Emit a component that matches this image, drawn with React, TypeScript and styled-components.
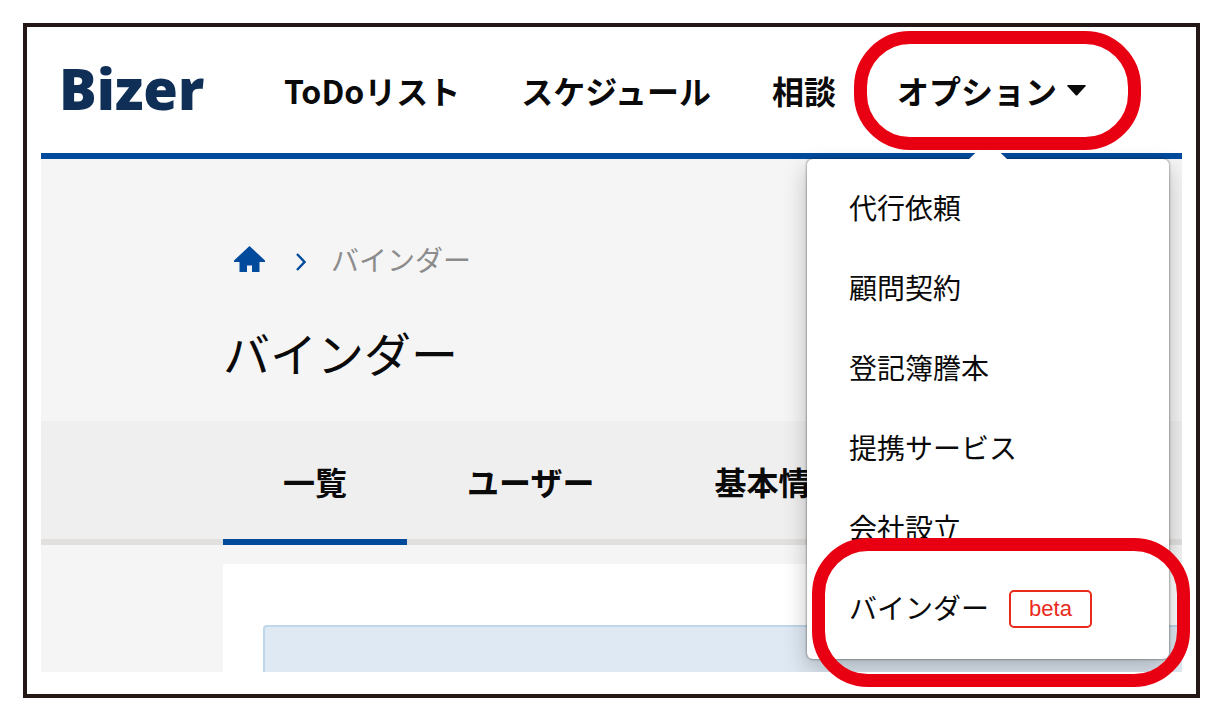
import React from 'react';
import styled, { createGlobalStyle } from 'styled-components';

const GlobalStyle = createGlobalStyle`
  *, *::before, *::after { box-sizing: border-box; }
  body {
    margin: 0;
    background: #fff;
    color: #0a0a0a;
    font-family: "Noto Sans CJK JP", sans-serif;
  }
`;

const NAVY = '#0f2f56';
const BLUE = '#024b9c';
const RED = '#e80012';

const Frame = styled.div`
  position: relative;
  margin: 23px;
  padding: 0 14px 22px;
  border: 4px solid #231815;
`;

const Screen = styled.div`
  overflow: hidden;
  background: #f5f5f5;
`;

const Header = styled.header`
  display: flex;
  align-items: center;
  height: 132px;
  padding-left: 18px;
  border-bottom: 6px solid ${BLUE};
  background: #fff;
`;

const Logo = styled.a`
  width: 225px;
  padding-bottom: 4px;
  color: ${NAVY};
  font-family: "Open Sans", "Noto Sans", sans-serif;
  font-size: 56px;
  font-weight: 800;
  line-height: 80px;
  text-decoration: none;
`;

const Nav = styled.nav`
  display: flex;
  gap: 61px;
  font-size: 32px;
  font-weight: 700;
  line-height: 48px;
  white-space: nowrap;
`;

const NavLink = styled.a`
  color: inherit;
  text-decoration: none;
`;

const NavDropdown = styled.div`
  position: relative;
`;

const NavButton = styled.button`
  display: flex;
  align-items: center;
  gap: 10px;
  padding: 0;
  border: 0;
  background: none;
  color: inherit;
  font: inherit;
`;

const Menu = styled.ul`
  position: absolute;
  z-index: 1;
  top: 93px;
  left: -90px;
  width: 362px;
  margin: 0;
  padding: 8px 0 12px;
  list-style: none;
  border-radius: 6px;
  background: #fff;
  box-shadow: 0 0 2px 1px rgba(0, 0, 0, 0.28), 0 10px 24px rgba(0, 0, 0, 0.24);

  &::before {
    content: '';
    position: absolute;
    bottom: 100%;
    left: 162px;
    border: solid transparent;
    border-width: 0 19px 18px;
    border-bottom-color: #fff;
  }
`;

const MenuLink = styled.a`
  display: flex;
  align-items: center;
  gap: 20px;
  height: 80px;
  padding-left: 42px;
  color: inherit;
  font-size: 28px;
  font-weight: 400;
  line-height: 40px;
  text-decoration: none;
`;

const Badge = styled.span`
  margin-top: 4px;
  padding: 0 18px;
  border: 2px solid #ea2a1c;
  border-radius: 5px;
  color: #ea2a1c;
  font-family: "Liberation Sans", sans-serif;
  font-size: 22px;
  line-height: 34px;
`;

const PageHead = styled.div`
  height: 262px;
  padding: 80px 0 0 182px;
`;

const Breadcrumb = styled.nav`
  display: flex;
  align-items: center;
  height: 40px;
  padding-left: 11px;
  color: #8c8c8c;
  font-size: 28px;
  line-height: 40px;
`;

const HomeLink = styled.a`
  display: flex;
  margin-right: 31px;
  color: ${BLUE};
`;

const Separator = styled.svg`
  margin: 6px 25px 0 0;
`;

const Title = styled.h1`
  margin: 37px 0 0;
  font-size: 47px;
  font-weight: 400;
  line-height: 72px;
`;

const Tabs = styled.nav`
  display: flex;
  height: 124px;
  padding-left: 182px;
  background: #efefef;
  box-shadow: inset 0 -6px #e1e0de;
`;

const Tab = styled.a<{ $active?: boolean }>`
  display: flex;
  align-items: center;
  padding: 2px 60px 0;
  border-bottom: 6px solid ${({ $active }) => ($active ? BLUE : 'transparent')};
  color: inherit;
  font-size: 32px;
  font-weight: 700;
  line-height: 48px;
  text-decoration: none;
  white-space: nowrap;
`;

const Panel = styled.main`
  margin: 19px 0 0 182px;
  padding: 61px 0 0 40px;
  background: #fff;
`;

const Notice = styled.div`
  height: 47px;
  border: solid #bfd7ea;
  border-width: 2px 0 0 2px;
  border-radius: 4px 0 0 0;
  background: #dfe9f3;
`;

const Highlight = styled.div<{ $x: number; $y: number; $w: number; $h: number }>`
  position: absolute;
  z-index: 2;
  left: ${({ $x }) => $x}px;
  top: ${({ $y }) => $y}px;
  width: ${({ $w }) => $w}px;
  height: ${({ $h }) => $h}px;
  border: 13px solid ${RED};
  border-radius: 56px;
  pointer-events: none;
`;

const menuItems = [
  { label: '代行依頼' },
  { label: '顧問契約' },
  { label: '登記簿謄本' },
  { label: '提携サービス' },
  { label: '会社設立' },
  { label: 'バインダー', badge: 'beta' },
];

export default function App() {
  return (
    <>
      <GlobalStyle />
      <Frame>
        <Screen>
          <Header>
            <Logo href="#">Bizer</Logo>
            <Nav>
              <NavLink href="#">ToDoリスト</NavLink>
              <NavLink href="#">スケジュール</NavLink>
              <NavLink href="#">相談</NavLink>
              <NavDropdown>
                <NavButton type="button" aria-haspopup="true" aria-expanded="true">
                  オプション
                  <svg width="19" height="11" viewBox="0 0 19 11" aria-hidden="true">
                    <path d="M1 0H18Q19.500 0 18.500 1.200L10.500 10Q9.500 11 8.500 10L.5 1.200Q-.5 0 1 0Z" fill="currentColor" />
                  </svg>
                </NavButton>
                <Menu>
                  {menuItems.map(({ label, badge }) => (
                    <li key={label}>
                      <MenuLink href="#">
                        {label}
                        {badge && <Badge>{badge}</Badge>}
                      </MenuLink>
                    </li>
                  ))}
                </Menu>
              </NavDropdown>
            </Nav>
          </Header>
          <PageHead>
            <Breadcrumb aria-label="breadcrumb">
              <HomeLink href="#" aria-label="ホーム">
                <svg width="31" height="26" viewBox="0 0 31 26" aria-hidden="true">
                  <path d="M15.500 0L31 14.500V16H25.500V26H18V19.500H13V26H5.500V16H0V14.500Z" fill="currentColor" />
                </svg>
              </HomeLink>
              <Separator width="10" height="18" viewBox="0 0 10 18" aria-hidden="true">
                <path d="M1 1L8.500 9L1 17" fill="none" stroke={BLUE} strokeWidth="2.400" />
              </Separator>
              <span>バインダー</span>
            </Breadcrumb>
            <Title>バインダー</Title>
          </PageHead>
          <Tabs>
            <Tab href="#" $active>一覧</Tab>
            <Tab href="#">ユーザー</Tab>
            <Tab href="#">基本情報</Tab>
          </Tabs>
          <Panel>
            <Notice />
          </Panel>
        </Screen>
        <Highlight $x={827} $y={4} $w={287} $h={119} />
        <Highlight $x={785} $y={511} $w={378} $h={149} />
      </Frame>
    </>
  );
}
